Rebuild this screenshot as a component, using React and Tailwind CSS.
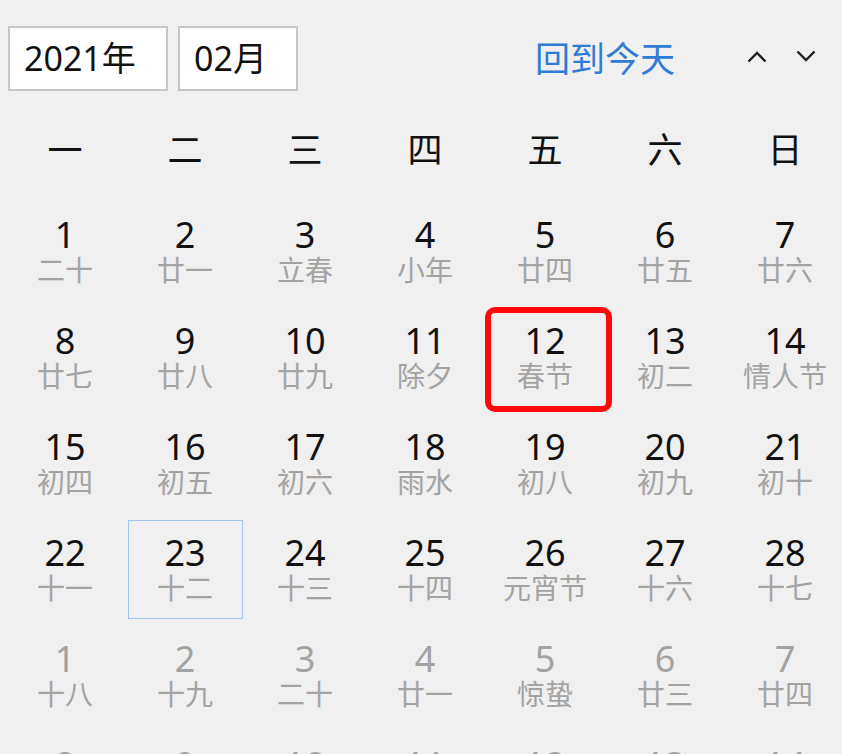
import React from 'react';

const FONT = { fontFamily: '"Noto Sans", "Noto Sans CJK SC", sans-serif' };

const WEEK = ['一', '二', '三', '四', '五', '六', '日'];

// [day, lunar, inMonth]
const ROWS = [
  [[1, '二十'], [2, '廿一'], [3, '立春'], [4, '小年'], [5, '廿四'], [6, '廿五'], [7, '廿六']],
  [[8, '廿七'], [9, '廿八'], [10, '廿九'], [11, '除夕'], [12, '春节'], [13, '初二'], [14, '情人节']],
  [[15, '初四'], [16, '初五'], [17, '初六'], [18, '雨水'], [19, '初八'], [20, '初九'], [21, '初十']],
  [[22, '十一'], [23, '十二'], [24, '十三'], [25, '十四'], [26, '元宵节'], [27, '十六'], [28, '十七']],
  [[1, '十八', 1], [2, '十九', 1], [3, '二十', 1], [4, '廿一', 1], [5, '惊蛰', 1], [6, '廿三', 1], [7, '廿四', 1]],
  [[8, '廿五', 1], [9, '廿六', 1], [10, '廿七', 1], [11, '廿八', 1], [12, '廿九', 1], [13, '二月', 1], [14, '初二', 1]],
];

function DayCell({ day, lunar, other, festival, today }) {
  return (
    <div className="relative h-[106px] flex flex-col items-center justify-center">
      {festival && (
        <div className="absolute left-0 right-[-7px] top-[2px] bottom-[-1px] border-[6px] border-[#ff0a0a] rounded-[10px]" />
      )}
      {today && <div className="absolute left-[3px] right-[2px] top-[3px] bottom-[4px] border border-[#a3c6ee]" />}
      <span className={`text-[36px] leading-[36px] ${other ? 'text-[#a2a2a2]' : 'text-[#111]'}`}>{day}</span>
      <span className="text-[28px] leading-[34px] text-[#a3a3a3]">{lunar}</span>
    </div>
  );
}

export default function App() {
  return (
    <div className="w-[842px] h-[754px] overflow-hidden bg-[#f0f0f0]" style={FONT}>
      {/* toolbar */}
      <div className="flex items-center pt-[26px] pl-[8px]">
        <div className="w-[160px] h-[65px] border-2 border-[#c6c6c6] bg-white flex items-center pl-[14px] text-[34px] text-[#111]">
          2021年
        </div>
        <div className="w-[120px] h-[65px] ml-[10px] border-2 border-[#c6c6c6] bg-white flex items-center pl-[14px] text-[34px] text-[#111]">
          02月
        </div>
        <span className="ml-[237px] text-[35px] text-[#2e7cd6] leading-none">回到今天</span>
        <div className="ml-[72px] flex items-center gap-[29px] -mt-[4px]">
          <svg width="20" height="12" viewBox="0 0 20 12">
            <polyline points="1.5,10.5 10,2 18.5,10.5" fill="none" stroke="#1e1e1e" strokeWidth="2.4" />
          </svg>
          <svg width="20" height="12" viewBox="0 0 20 12" className="-mt-[2px]">
            <polyline points="1.5,1.5 10,10 18.5,1.5" fill="none" stroke="#1e1e1e" strokeWidth="2.4" />
          </svg>
        </div>
      </div>

      {/* weekdays */}
      <div className="grid grid-cols-[repeat(7,120px)] pl-[5px] mt-[29px] h-[60px] items-center">
        {WEEK.map((w) => (
          <div key={w} className="text-center text-[35px] text-[#111]">
            {w}
          </div>
        ))}
      </div>

      {/* days */}
      <div className="grid grid-cols-[repeat(7,120px)] pl-[5px] mt-[19px]">
        {ROWS.map((row, r) =>
          row.map(([day, lunar, other], c) => (
            <DayCell
              key={`${r}-${c}`}
              day={day}
              lunar={lunar}
              other={!!other}
              festival={r === 1 && c === 4}
              today={r === 3 && c === 1}
            />
          ))
        )}
      </div>
    </div>
  );
}
